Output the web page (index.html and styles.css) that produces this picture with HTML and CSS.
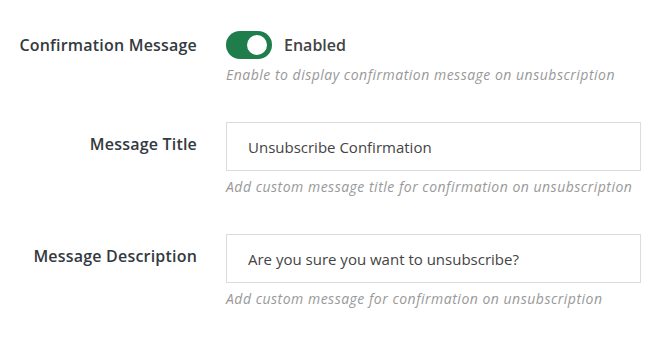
FILE: index.html
```html
<!DOCTYPE html>
<html lang="en">
<head>
    <meta charset="UTF-8">
    <meta name="viewport" content="width=device-width, initial-scale=1.0">
    <title>Unsubscribe Settings</title>
    <link rel="stylesheet" href="styles.css">
</head>
<body>
    <div class="settings">
        <div class="row">
            <label class="row-label">Confirmation Message</label>
            <div class="row-field">
                <div class="toggle-line">
                    <span class="toggle on"><span class="knob"></span></span>
                    <span class="toggle-text">Enabled</span>
                </div>
                <p class="help">Enable to display confirmation message on unsubscription</p>
            </div>
        </div>

        <div class="row">
            <label class="row-label label-input">Message Title</label>
            <div class="row-field">
                <input class="text-input" type="text" value="Unsubscribe Confirmation">
                <p class="help">Add custom message title for confirmation on unsubscription</p>
            </div>
        </div>

        <div class="row">
            <label class="row-label label-input">Message Description</label>
            <div class="row-field">
                <input class="text-input" type="text" value="Are you sure you want to unsubscribe?">
                <p class="help">Add custom message for confirmation on unsubscription</p>
            </div>
        </div>
    </div>
</body>
</html>
```

FILE: styles.css
```css
:root {
    --label-color: #333a40;
    --text-color: #444;
    --help-color: #999;
    --border-color: #dcdcdc;
    --green: #1f7d4b;
}

body {
    margin: 0;
    background: #fff;
    font-family: 'Open Sans', 'Noto Sans', sans-serif;
    color: var(--text-color);
}

.settings {
    padding: 31px 19px 0 0;
    display: flex;
    flex-direction: column;
    gap: 38px;
}

.row {
    display: grid;
    grid-template-columns: 197px 1fr;
    column-gap: 29px;
}

.row-label {
    text-align: right;
    font-size: 16px;
    font-weight: 600;
    color: var(--label-color);
    line-height: 28px;
    letter-spacing: 0.2px;
}

.label-input {
    line-height: 44px;
}

.row-field {
    display: flex;
    flex-direction: column;
}

.toggle-line {
    display: flex;
    align-items: center;
    gap: 12px;
    height: 28px;
}

.toggle {
    width: 46px;
    height: 28px;
    border-radius: 14px;
    background: #ccc;
    position: relative;
    box-sizing: border-box;
}

.toggle.on {
    background: var(--green);
}

.knob {
    position: absolute;
    top: 4px;
    right: 5px;
    width: 20px;
    height: 20px;
    border-radius: 50%;
    background: #fff;
}

.toggle-text {
    font-size: 16px;
    font-weight: 600;
    color: var(--text-color);
}

.text-input {
    height: 49px;
    box-sizing: border-box;
    border: 1px solid var(--border-color);
    padding: 0 21px;
    font-family: 'Open Sans', 'Noto Sans', sans-serif;
    font-size: 15px;
    color: var(--text-color);
    outline: none;
}

.help {
    margin: 7px 0 0;
    font-size: 14px;
    font-style: italic;
    color: var(--help-color);
    line-height: 18px;
    letter-spacing: 0.5px;
}
```
